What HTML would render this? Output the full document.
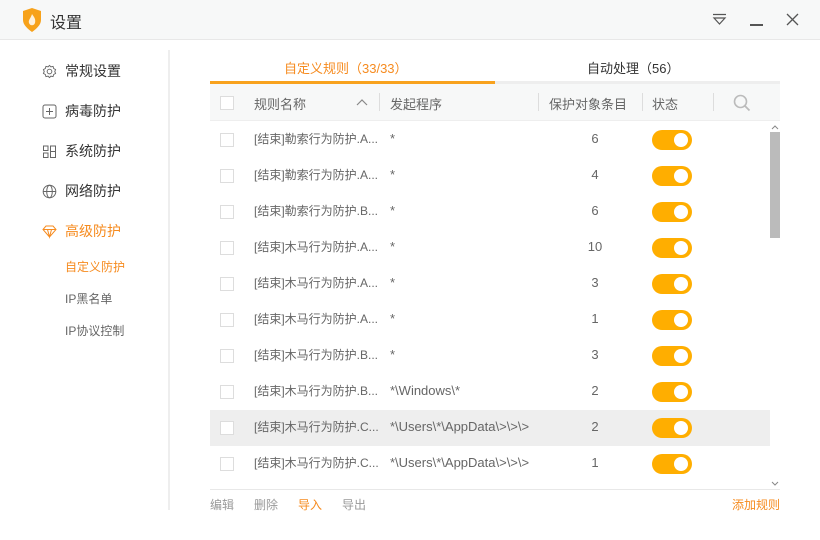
<!DOCTYPE html>
<html><head><meta charset="utf-8"><style>
*{margin:0;padding:0;box-sizing:border-box}
body{width:820px;height:540px;background:#fff;font-family:"Liberation Sans","Noto Sans CJK SC",sans-serif;position:relative;overflow:hidden;color:#333}
.a{position:absolute}
.title{left:0;top:0;width:820px;height:40px;background:#f7f8f8;border-bottom:1px solid #e8e8e8}
.nav{left:42px;font-size:14px;color:#333;display:flex;align-items:center}
.nav svg{margin-right:8px}
.sub{left:65px;font-size:12px;color:#666}
.cb{width:14px;height:14px;border:1px solid #ddd;background:#fff}
.row{left:210px;width:560px;height:36px;font-size:12px;color:#666}
.row span{position:absolute;top:0;line-height:34px}
.tg{position:absolute;left:442px;top:8px;width:40px;height:20px;border-radius:10px;background:#ffae00}
.tg:after{content:"";position:absolute;right:4px;top:3px;width:14px;height:14px;border-radius:50%;background:#fff}
.hd{font-size:13px;color:#666}
.sep{width:1px;height:18px;background:#ddd;top:93px}
</style></head><body>
<div class="a title"></div>
<svg class="a" style="left:22px;top:8px" width="20" height="24" viewBox="0 0 20 24"><path d="M1 3 L10 0 L19 3 L19 12 C19 17 14 21 10 24 C6 21 1 17 1 12 Z" fill="#f7a21b"/><path d="M10 6 C12 9 14 11 13 15 C12 18 8 18 7 15 C6 12 9 10 10 6Z" fill="#fff" opacity=".85"/></svg>
<div class="a" style="left:50px;top:9px;font-size:16px;color:#333">设置</div>
<svg class="a" style="left:712px;top:13px" width="15" height="13"><path d="M1 1.5H14M2 5L7.5 11L13 5Z" stroke="#555" fill="none" stroke-width="1.2"/></svg>
<div class="a" style="left:750px;top:24px;width:13px;height:1.5px;background:#555"></div>
<svg class="a" style="left:786px;top:13px" width="13" height="13"><path d="M1 1L12 12M12 1L1 12" stroke="#555" stroke-width="1.3"/></svg>

<div class="a nav" style="top:61px"><svg width="15" height="15" viewBox="0 0 16 16"><circle cx="8" cy="8" r="2.5" fill="none" stroke="#666"/><path d="M8 1.5L9.5 3 11.8 2.6 12.4 4.8 14.5 6 13.6 8 14.5 10 12.4 11.2 11.8 13.4 9.5 13 8 14.5 6.5 13 4.2 13.4 3.6 11.2 1.5 10 2.4 8 1.5 6 3.6 4.8 4.2 2.6 6.5 3Z" fill="none" stroke="#666"/></svg>常规设置</div>
<div class="a nav" style="top:101px"><svg width="15" height="15"><rect x="1" y="1" width="13" height="13" rx="2" fill="none" stroke="#666"/><path d="M7.5 4V11M4 7.5H11" stroke="#666"/></svg>病毒防护</div>
<div class="a nav" style="top:141px"><svg width="15" height="15"><path d="M1.5 2H6V6.5H1.5ZM1.5 9H6V13.5H1.5ZM8.5 2H13.5V13.5H8.5ZM8.5 7.5H13.5" fill="none" stroke="#666"/></svg>系统防护</div>
<div class="a nav" style="top:181px"><svg width="15" height="15"><circle cx="7.5" cy="7.5" r="6.3" fill="none" stroke="#666"/><ellipse cx="7.5" cy="7.5" rx="2.8" ry="6.3" fill="none" stroke="#666"/><path d="M1.2 7.5H13.8" stroke="#666"/></svg>网络防护</div>
<div class="a nav" style="top:221px;color:#f68b1f"><svg width="15" height="15"><path d="M1 5.5L4 2H11L14 5.5L7.5 13Z M1 5.5H14M5.5 5.5L7.5 13L9.5 5.5" fill="none" stroke="#f68b1f"/></svg>高级防护</div>
<div class="a sub" style="top:258px;color:#f68b1f">自定义防护</div>
<div class="a sub" style="top:290px">IP黑名单</div>
<div class="a sub" style="top:322px">IP协议控制</div>
<div class="a" style="left:168px;top:50px;width:2px;height:460px;background:#eee"></div>

<div class="a" style="left:284px;top:58px;font-size:13px;color:#f68b1f">自定义规则（33/33）</div>
<div class="a" style="left:587px;top:58px;font-size:13px;color:#333">自动处理（56）</div>
<div class="a" style="left:210px;top:81px;width:570px;height:3px;background:#eee"></div>
<div class="a" style="left:210px;top:81px;width:285px;height:3px;background:#f8a21e"></div>
<div class="a" style="left:210px;top:84px;width:570px;height:37px;background:#f7f8f8;border-bottom:1px solid #eee"></div>
<div class="a cb" style="left:220px;top:96px"></div>
<div class="a hd" style="left:254px;top:94px">规则名称</div>
<svg class="a" style="left:356px;top:98px" width="12" height="8"><path d="M1 7L6 2L11 7" fill="none" stroke="#888" stroke-width="1.2"/></svg>
<div class="a sep" style="left:379px"></div>
<div class="a hd" style="left:390px;top:94px">发起程序</div>
<div class="a sep" style="left:538px"></div>
<div class="a hd" style="left:549px;top:94px">保护对象条目</div>
<div class="a sep" style="left:642px"></div>
<div class="a hd" style="left:652px;top:94px">状态</div>
<div class="a sep" style="left:713px"></div>
<svg class="a" style="left:733px;top:94px" width="18" height="18"><circle cx="7.5" cy="7.5" r="6" fill="none" stroke="#bbb" stroke-width="1.6"/><path d="M12 12L16.5 16.5" stroke="#bbb" stroke-width="1.8"/></svg>

<div class="a" style="left:210px;top:410px;width:560px;height:36px;background:#eee"></div>
<div id="rows"></div>
<script>
var d=[["[结束]勒索行为防护.A...","*","6"],["[结束]勒索行为防护.A...","*","4"],["[结束]勒索行为防护.B...","*","6"],["[结束]木马行为防护.A...","*","10"],["[结束]木马行为防护.A...","*","3"],["[结束]木马行为防护.A...","*","1"],["[结束]木马行为防护.B...","*","3"],["[结束]木马行为防护.B...","*\\Windows\\*","2"],["[结束]木马行为防护.C...","*\\Users\\*\\AppData\\>\\>\\>","2"],["[结束]木马行为防护.C...","*\\Users\\*\\AppData\\>\\>\\>","1"]];
var h="";d.forEach(function(r,i){var t=122+36*i;h+='<div class="a row" style="top:'+t+'px"><div class="a cb" style="left:10px;top:11px"></div><span style="left:44px">'+r[0]+'</span><span style="left:180px;font-size:13px">'+r[1]+'</span><span style="left:370px;width:30px;text-align:center;font-size:13px">'+r[2]+'</span><div class="tg"></div></div>'});
document.getElementById("rows").innerHTML=h;
</script>
<div class="a" style="left:770px;top:132px;width:10px;height:106px;background:#bbb"></div>
<svg class="a" style="left:771px;top:124px" width="8" height="6"><path d="M1 5L4 2L7 5" fill="none" stroke="#888"/></svg>
<svg class="a" style="left:771px;top:481px" width="8" height="6"><path d="M1 1L4 4L7 1" fill="none" stroke="#888"/></svg>
<div class="a" style="left:210px;top:489px;width:570px;height:1px;background:#e8e8e8"></div>
<div class="a" style="left:210px;top:496px;font-size:12px;color:#999">编辑</div>
<div class="a" style="left:254px;top:496px;font-size:12px;color:#999">删除</div>
<div class="a" style="left:298px;top:496px;font-size:12px;color:#f68b1f">导入</div>
<div class="a" style="left:342px;top:496px;font-size:12px;color:#999">导出</div>
<div class="a" style="left:732px;top:496px;font-size:12px;color:#f68b1f">添加规则</div>
</body></html>
